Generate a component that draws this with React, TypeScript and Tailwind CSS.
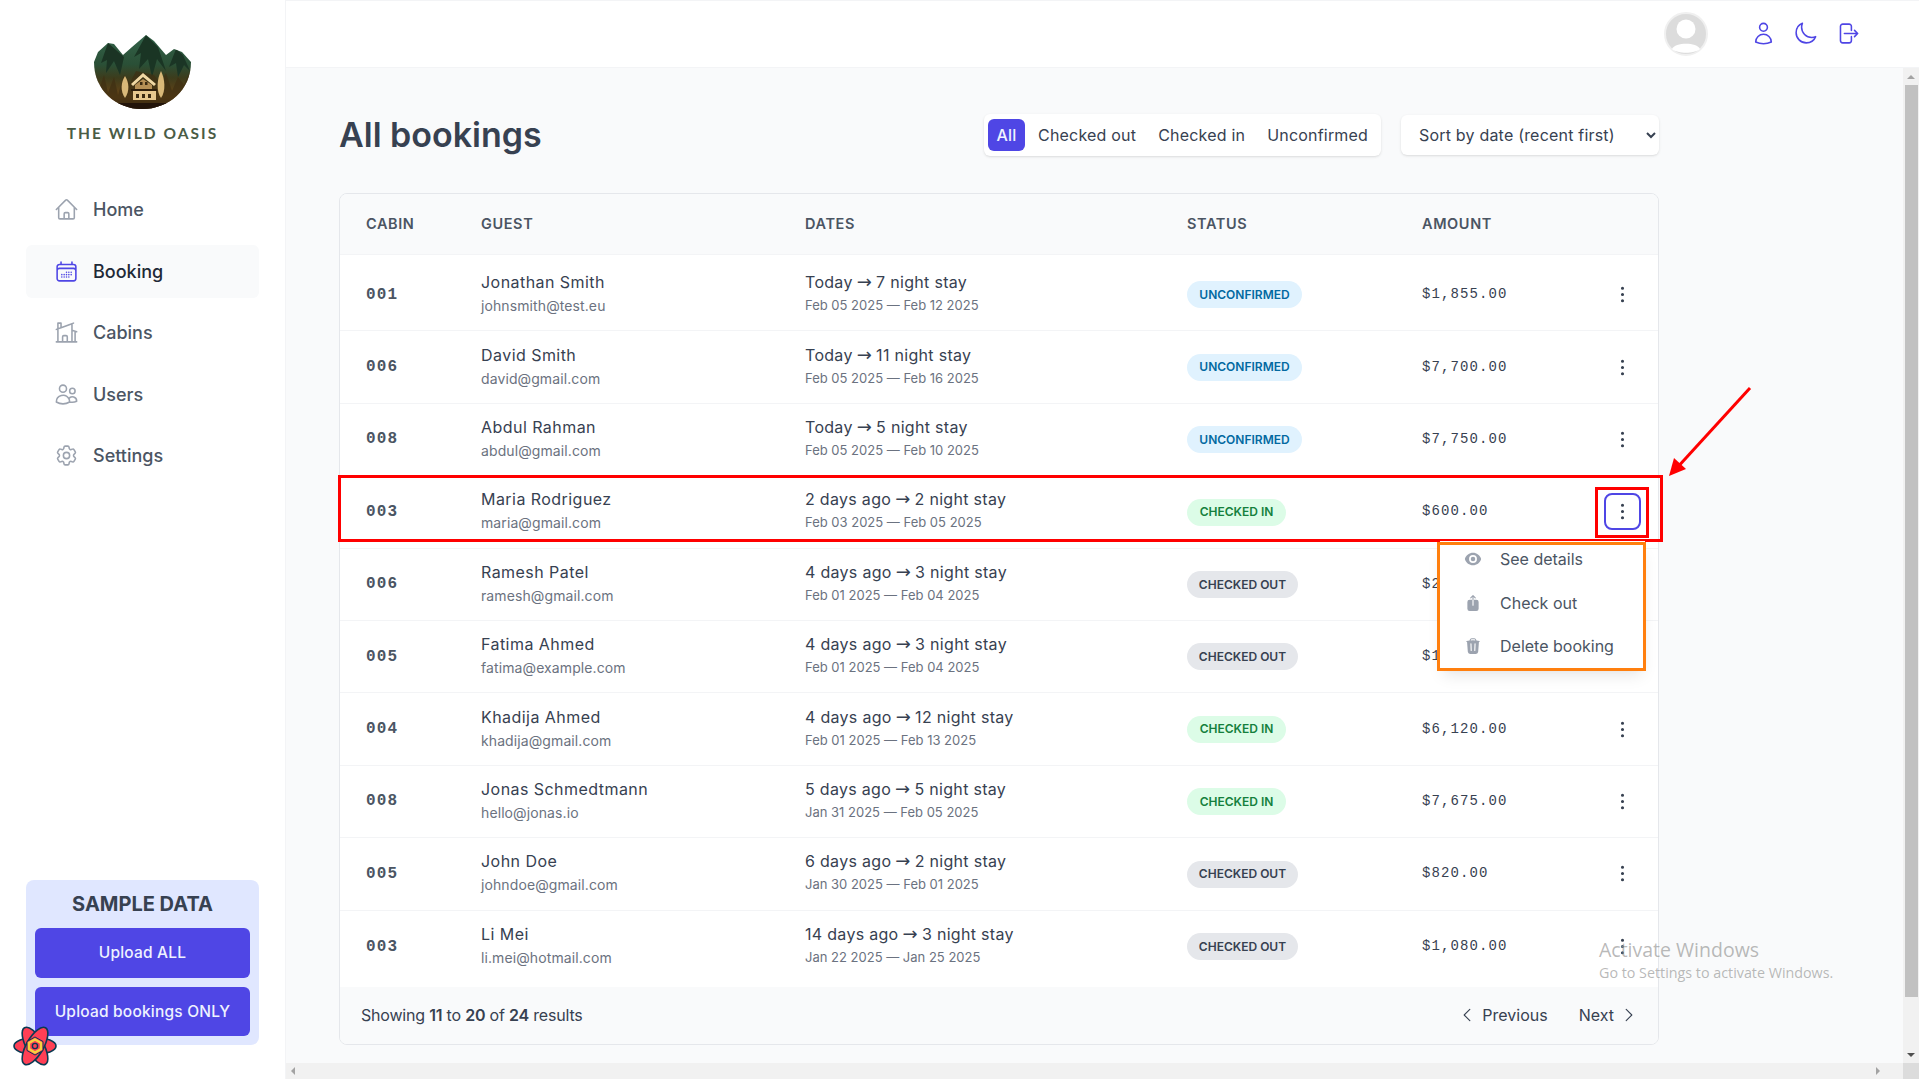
import {
  HiOutlineHome,
  HiOutlineCalendarDays,
  HiOutlineHomeModern,
  HiOutlineUsers,
  HiOutlineCog6Tooth,
  HiOutlineUser,
  HiOutlineMoon,
  HiOutlineArrowRightOnRectangle,
  HiEllipsisVertical,
  HiEye,
  HiArrowUpOnSquare,
  HiTrash,
  HiChevronLeft,
  HiChevronRight,
} from "react-icons/hi2"

type Status = "unconfirmed" | "checked-in" | "checked-out"

const bookings: { cabin: string; name: string; email: string; when: string; nights: number; range: string; status: Status; amount: string }[] = [
  { cabin: "001", name: "Jonathan Smith", email: "johnsmith@test.eu", when: "Today", nights: 7, range: "Feb 05 2025 — Feb 12 2025", status: "unconfirmed", amount: "$1,855.00" },
  { cabin: "006", name: "David Smith", email: "david@gmail.com", when: "Today", nights: 11, range: "Feb 05 2025 — Feb 16 2025", status: "unconfirmed", amount: "$7,700.00" },
  { cabin: "008", name: "Abdul Rahman", email: "abdul@gmail.com", when: "Today", nights: 5, range: "Feb 05 2025 — Feb 10 2025", status: "unconfirmed", amount: "$7,750.00" },
  { cabin: "003", name: "Maria Rodriguez", email: "maria@gmail.com", when: "2 days ago", nights: 2, range: "Feb 03 2025 — Feb 05 2025", status: "checked-in", amount: "$600.00" },
  { cabin: "006", name: "Ramesh Patel", email: "ramesh@gmail.com", when: "4 days ago", nights: 3, range: "Feb 01 2025 — Feb 04 2025", status: "checked-out", amount: "$2,100.00" },
  { cabin: "005", name: "Fatima Ahmed", email: "fatima@example.com", when: "4 days ago", nights: 3, range: "Feb 01 2025 — Feb 04 2025", status: "checked-out", amount: "$1,230.00" },
  { cabin: "004", name: "Khadija Ahmed", email: "khadija@gmail.com", when: "4 days ago", nights: 12, range: "Feb 01 2025 — Feb 13 2025", status: "checked-in", amount: "$6,120.00" },
  { cabin: "008", name: "Jonas Schmedtmann", email: "hello@jonas.io", when: "5 days ago", nights: 5, range: "Jan 31 2025 — Feb 05 2025", status: "checked-in", amount: "$7,675.00" },
  { cabin: "005", name: "John Doe", email: "johndoe@gmail.com", when: "6 days ago", nights: 2, range: "Jan 30 2025 — Feb 01 2025", status: "checked-out", amount: "$820.00" },
  { cabin: "003", name: "Li Mei", email: "li.mei@hotmail.com", when: "14 days ago", nights: 3, range: "Jan 22 2025 — Jan 25 2025", status: "checked-out", amount: "$1,080.00" },
]

const badgeStyles: Record<Status, string> = {
  unconfirmed: "bg-[#e0f2fe] text-[#0369a1] w-[115px]",
  "checked-in": "bg-[#dcfce7] text-[#15803d] w-[99px]",
  "checked-out": "bg-[#e5e7eb] text-[#374151] w-[111px]",
}

const navItems = [
  { label: "Home", icon: HiOutlineHome },
  { label: "Booking", icon: HiOutlineCalendarDays, active: true },
  { label: "Cabins", icon: HiOutlineHomeModern },
  { label: "Users", icon: HiOutlineUsers },
  { label: "Settings", icon: HiOutlineCog6Tooth },
]

function Logo() {
  return (
    <svg viewBox="0 0 97 74" className="w-[97px] h-[74px]">
      <defs>
        <linearGradient id="bowl" x1="0" y1="0" x2="0" y2="1">
          <stop offset="0" stopColor="#33634a" />
          <stop offset="0.4" stopColor="#2a4f36" />
          <stop offset="0.58" stopColor="#3d3c1c" />
          <stop offset="0.85" stopColor="#6b4416" />
          <stop offset="1" stopColor="#2a190b" />
        </linearGradient>
        <clipPath id="bowlClip">
          <path d="M0 27 L4 17 L14 8 L20 9 L29 20 L38 12 L52 0 L60 6 L72 20 L80 14 L88 17 L97 27 C97 55 75 74 48 74 C22 74 0 55 0 27 Z" />
        </clipPath>
      </defs>
      <g clipPath="url(#bowlClip)">
        <rect width="97" height="74" fill="url(#bowl)" />
        <path d="M14 8 L7 28 L13 25 L12 38 L20 26 L26 40 L30 22 Z" fill="#1b3424" />
        <path d="M52 0 L40 22 L47 18 L45 34 L54 24 L58 42 L63 24 L72 36 L64 12 Z" fill="#1a3524" />
        <path d="M82 14 L75 32 L82 28 L84 42 L90 30 L96 36 L89 20 Z" fill="#1b3525" />
        <path d="M0 34 L6 52 L10 40 L14 58 L20 42 L24 60 L30 40 L36 48 L42 36 L60 40 L66 48 L72 38 L78 56 L84 42 L90 50 L97 34 L97 74 L0 74 Z" fill="#3f2f12" opacity="0.7" />
        <path d="M0 68 L97 68 L97 74 L0 74 Z" fill="#22140a" />
        <path d="M31 41 C27 47 26 56 31 63 C36 56 35 47 31 41 Z" fill="#d9b878" />
        <path d="M67 36 C63 44 62 56 67 63 C72 56 71 44 67 36 Z" fill="#d9b878" />
        <path d="M37 49 L49 38 L62 49 L60 51 L49 42 L39 51 Z" fill="#f0d8a4" />
        <path d="M41 50 L49 44 L58 50 L58 55 L41 55 Z" fill="#b58f55" />
        <rect x="37" y="54" width="26" height="2" fill="#2d1d0b" />
        <rect x="39" y="56" width="23" height="9" fill="#e6c78e" />
        <rect x="42" y="59" width="3" height="4" fill="#3b2a12" />
        <rect x="48" y="59" width="3" height="4" fill="#3b2a12" />
        <rect x="54" y="59" width="3" height="4" fill="#3b2a12" />
        <rect x="46" y="47" width="2.5" height="3" fill="#3b2a12" />
        <rect x="51" y="47" width="2.5" height="3" fill="#3b2a12" />
      </g>
    </svg>
  )
}

function QueryLogo() {
  return (
    <svg viewBox="0 0 44 44" className="w-[44px] h-[44px]">
      <g fill="#ff3f55" stroke="#0b3a53" strokeWidth="1.6">
        <ellipse cx="22" cy="22" rx="21" ry="8.5" />
        <ellipse cx="22" cy="22" rx="21" ry="8.5" transform="rotate(60 22 22)" />
        <ellipse cx="22" cy="22" rx="21" ry="8.5" transform="rotate(120 22 22)" />
      </g>
      <path d="M22 13 L30 17.5 L30 26.5 L22 31 L14 26.5 L14 17.5 Z" fill="#ff3f55" stroke="#0b3a53" strokeWidth="1" />
      <path d="M22 15.5 L28 19 L28 25 L22 28.5 L16 25 L16 19 Z" fill="none" stroke="#f7d23e" strokeWidth="2.4" />
      <circle cx="22" cy="22" r="2.6" fill="none" stroke="#0b3a53" strokeWidth="1.4" />
    </svg>
  )
}

function Avatar() {
  return (
    <svg viewBox="0 0 44 44" className="w-[44px] h-[44px]">
      <circle cx="22" cy="22" r="21" fill="#dcdcdc" stroke="#f0f0f0" strokeWidth="2" />
      <circle cx="22" cy="17" r="9.5" fill="#ffffff" />
      <path d="M8 37 C11 30 33 30 36 37 C30 42 14 42 8 37 Z" fill="#ffffff" />
    </svg>
  )
}

function Sidebar() {
  return (
    <aside className="w-[286px] shrink-0 h-full bg-white border-r border-[#f3f4f6] flex flex-col px-[26px] pt-[35px] pb-[34px]">
      <div className="flex flex-col items-center">
        <Logo />
        <span className="mt-[15px] text-[15.5px] leading-[18px] tracking-[2.05px] text-[#4a5c46] font-['Lato',sans-serif] font-bold">THE WILD OASIS</span>
      </div>
      <nav className="mt-[41px] flex flex-col gap-[8.5px]">
        {navItems.map((item) => {
          const Icon = item.icon
          return (
            <a
              key={item.label}
              className={`h-[53px] rounded-md flex items-center gap-[14px] px-[28px] text-[18px] font-medium ${item.active ? "bg-[#f9fafb] text-[#1f2937]" : "text-[#4b5563]"}`}
            >
              <Icon className={`w-[25px] h-[25px] ${item.active ? "text-[#4f46e5]" : "text-[#9ca3af]"}`} />
              {item.label}
            </a>
          )
        })}
      </nav>
      <div className="mt-auto h-[165px] rounded-lg bg-[#e0e7ff] p-[9px] flex flex-col">
        <h3 className="text-center text-[20px] leading-[30px] font-bold text-[#374151]">SAMPLE DATA</h3>
        <button className="mt-[9px] h-[50px] rounded-md bg-[#4f46e5] text-[#eef2ff] text-[15.5px] tracking-[0.2px] font-medium">Upload ALL</button>
        <button className="mt-[9px] h-[49px] rounded-md bg-[#4f46e5] text-[#eef2ff] text-[15.5px] tracking-[0.2px] font-medium">Upload bookings ONLY</button>
      </div>
    </aside>
  )
}

function Header() {
  return (
    <header className="h-[68px] shrink-0 bg-white border-t border-b border-[#f3f4f6] flex items-center justify-end pr-[59px]">
      <Avatar />
      <div className="ml-[43px] mb-[2px] flex items-center gap-[17px] text-[#4f46e5]">
        <HiOutlineUser className="w-[25px] h-[25px]" />
        <HiOutlineMoon className="w-[25px] h-[25px]" />
        <HiOutlineArrowRightOnRectangle className="w-[25px] h-[25px]" />
      </div>
    </header>
  )
}

function RowMenu() {
  return (
    <div className="absolute right-[-4px] top-[48px] z-10 w-[205px] h-[127px] bg-white shadow-lg flex flex-col justify-center gap-[13.5px] pl-[24px] pb-[4px] text-[16px] text-[#4b5563]">
      <div className="flex items-center gap-[18px] h-[30px]"><HiEye className="w-[18px] h-[18px] text-[#9ca3af]" />See details</div>
      <div className="flex items-center gap-[18px] h-[30px]"><HiArrowUpOnSquare className="w-[18px] h-[18px] text-[#9ca3af]" />Check out</div>
      <div className="flex items-center gap-[18px] h-[30px]"><HiTrash className="w-[18px] h-[18px] text-[#9ca3af]" />Delete booking</div>
    </div>
  )
}

function BookingsTable() {
  return (
    <div className="w-[1320px] mt-[37px] rounded-lg border border-[#e5e7eb] overflow-hidden bg-white text-[#374151]">
      <div className="h-[61px] bg-[#f9fafb] border-b border-[#f3f4f6] grid grid-cols-[115px_324px_382px_235px_1fr] items-center pl-[26px] text-[14.5px] font-semibold tracking-[0.6px] text-[#4b5563]">
        <div>CABIN</div>
        <div>GUEST</div>
        <div>DATES</div>
        <div>STATUS</div>
        <div>AMOUNT</div>
      </div>
      <div className="py-[4px]">
        {bookings.map((b, i) => (
          <div
            key={i}
            className="h-[72.4px] border-b border-[#f3f4f6] last:border-b-0 grid grid-cols-[115px_324px_382px_235px_1fr_37px] items-center pl-[26px] pr-[17px]"
          >
            <div className="font-['Liberation_Mono',monospace] font-bold text-[16px] tracking-[1.1px] text-[#4b5563]">{b.cabin}</div>
            <div className="flex flex-col pb-[2px]">
              <span className="text-[16px] leading-[24px] tracking-[0.45px]">{b.name}</span>
              <span className="text-[14px] leading-[23px] text-[#6b7280] tracking-[0.1px]">{b.email}</span>
            </div>
            <div className="flex flex-col pb-[2px]">
              <span className="text-[16px] leading-[24px] tracking-[0.3px]">
                {b.when}
                <span className="mx-[4px] text-[18px] leading-none font-['DejaVu_Sans',sans-serif] font-normal">→</span>
                {b.nights} night stay
              </span>
              <span className="text-[13px] leading-[23px] text-[#6b7280]">{b.range}</span>
            </div>
            <div>
              <span className={`inline-flex h-[27px] items-center justify-center rounded-full text-[12px] font-semibold ${badgeStyles[b.status]}`}>
                {b.status.replace("-", " ").toUpperCase()}
              </span>
            </div>
            <div className="font-['Liberation_Mono',monospace] text-[14px] tracking-[1.1px] text-[#374151]">{b.amount}</div>
            <div className="relative">
              <button className={`w-[37px] h-[37px] flex items-center justify-center rounded-lg ${i === 3 ? "border-2 border-[#4f46e5]" : ""}`}>
                <HiEllipsisVertical className="w-[25px] h-[25px] text-[#374151]" />
              </button>
              {i === 3 && <RowMenu />}
            </div>
          </div>
        ))}
      </div>
      <div className="h-[57px] bg-[#f9fafb] flex items-center justify-between pl-[21px] pr-[20px] text-[16px]">
        <p className="tracking-[-0.2px]">Showing <b className="font-semibold">11</b> to <b className="font-semibold">20</b> of <b className="font-semibold">24</b> results</p>
        <div className="flex items-center gap-[31px]">
          <span className="flex items-center gap-[6px]"><HiChevronLeft className="w-[18px] h-[18px]" />Previous</span>
          <span className="flex items-center gap-[6px]">Next<HiChevronRight className="w-[18px] h-[18px]" /></span>
        </div>
      </div>
    </div>
  )
}

function Annotations() {
  return (
    <>
      <div className="absolute left-[338px] top-[475px] w-[1325px] h-[67px] border-[3px] border-[#ff0000] pointer-events-none" />
      <div className="absolute left-[1595px] top-[487px] w-[54px] h-[51px] border-[3px] border-[#ff0000] pointer-events-none" />
      <div className="absolute left-[1437px] top-[542px] w-[209px] h-[129px] border-[3px] border-[#ff7f0e] z-20 pointer-events-none" />
      <svg className="absolute left-[1660px] top-[380px] w-[100px] h-[105px] pointer-events-none" viewBox="0 0 100 105">
        <line x1="90" y1="8" x2="15" y2="90" stroke="#ff0000" strokeWidth="3" />
        <path d="M9 96 L14 78 L26 89 Z" fill="#ff0000" />
      </svg>
      <div className="absolute left-[1599px] top-[937px] z-30 pointer-events-none font-['Open_Sans',sans-serif] text-[#9a9a9a]/70">
        <div className="text-[19.5px] leading-[26px]">Activate Windows</div>
        <div className="text-[14.3px] leading-[19px]">Go to Settings to activate Windows.</div>
      </div>
      <div className="absolute left-[13px] top-[1024px] z-30">
        <QueryLogo />
      </div>
    </>
  )
}

export default function App() {
  return (
    <div className="relative w-full h-screen overflow-hidden flex bg-white font-['Inter',sans-serif]">
      <Sidebar />
      <div className="flex-1 min-w-0 flex flex-col">
        <Header />
        <div className="flex-1 min-h-0 flex">
          <main className="flex-1 min-w-0 bg-[#f9fafb] pl-[53px] pt-[46px] overflow-hidden">
            <div className="w-[1320px] flex items-center justify-between">
              <h1 className="text-[34px] leading-[42px] font-semibold text-[#374151]">All bookings</h1>
              <div className="flex items-center gap-[20px]">
                <div className="h-[42px] w-[397px] bg-white rounded-md shadow-sm flex items-center px-[4px] text-[16px] tracking-[0.2px] text-[#374151]">
                  <span className="h-[32px] w-[37px] rounded-md bg-[#4f46e5] text-[#eef2ff] font-medium flex items-center justify-center">All</span>
                  <span className="ml-[13px]">Checked out</span>
                  <span className="ml-[22px]">Checked in</span>
                  <span className="ml-[22px]">Unconfirmed</span>
                </div>
                <select className="h-[40px] w-[258px] bg-white rounded-md shadow-sm pl-[14px] pr-[10px] text-[16px] tracking-[0.2px] text-[#374151]">
                  <option>Sort by date (recent first)</option>
                </select>
              </div>
            </div>
            <BookingsTable />
          </main>
          <div className="w-[16px] shrink-0 bg-[#f1f1f1] flex flex-col items-center">
            <div className="h-[17px] flex items-center"><div className="w-0 h-0 border-x-[4px] border-x-transparent border-b-[4px] border-b-[#a3a3a3]" /></div>
            <div className="w-[13px] h-[912px] bg-[#c1c1c1]" />
            <div className="mt-auto h-[17px] flex items-center"><div className="w-0 h-0 border-x-[4px] border-x-transparent border-t-[4px] border-t-[#505050]" /></div>
          </div>
        </div>
        <div className="h-[16px] shrink-0 bg-[#f1f1f1] flex items-center">
          <div className="ml-[5px] w-0 h-0 border-y-[4px] border-y-transparent border-r-[4px] border-r-[#a3a3a3]" />
          <div className="ml-auto mr-[23px] w-0 h-0 border-y-[4px] border-y-transparent border-l-[4px] border-l-[#a3a3a3]" />
          <div className="w-[16px] h-full bg-[#dcdcdc]" />
        </div>
      </div>
      <Annotations />
    </div>
  )
}
